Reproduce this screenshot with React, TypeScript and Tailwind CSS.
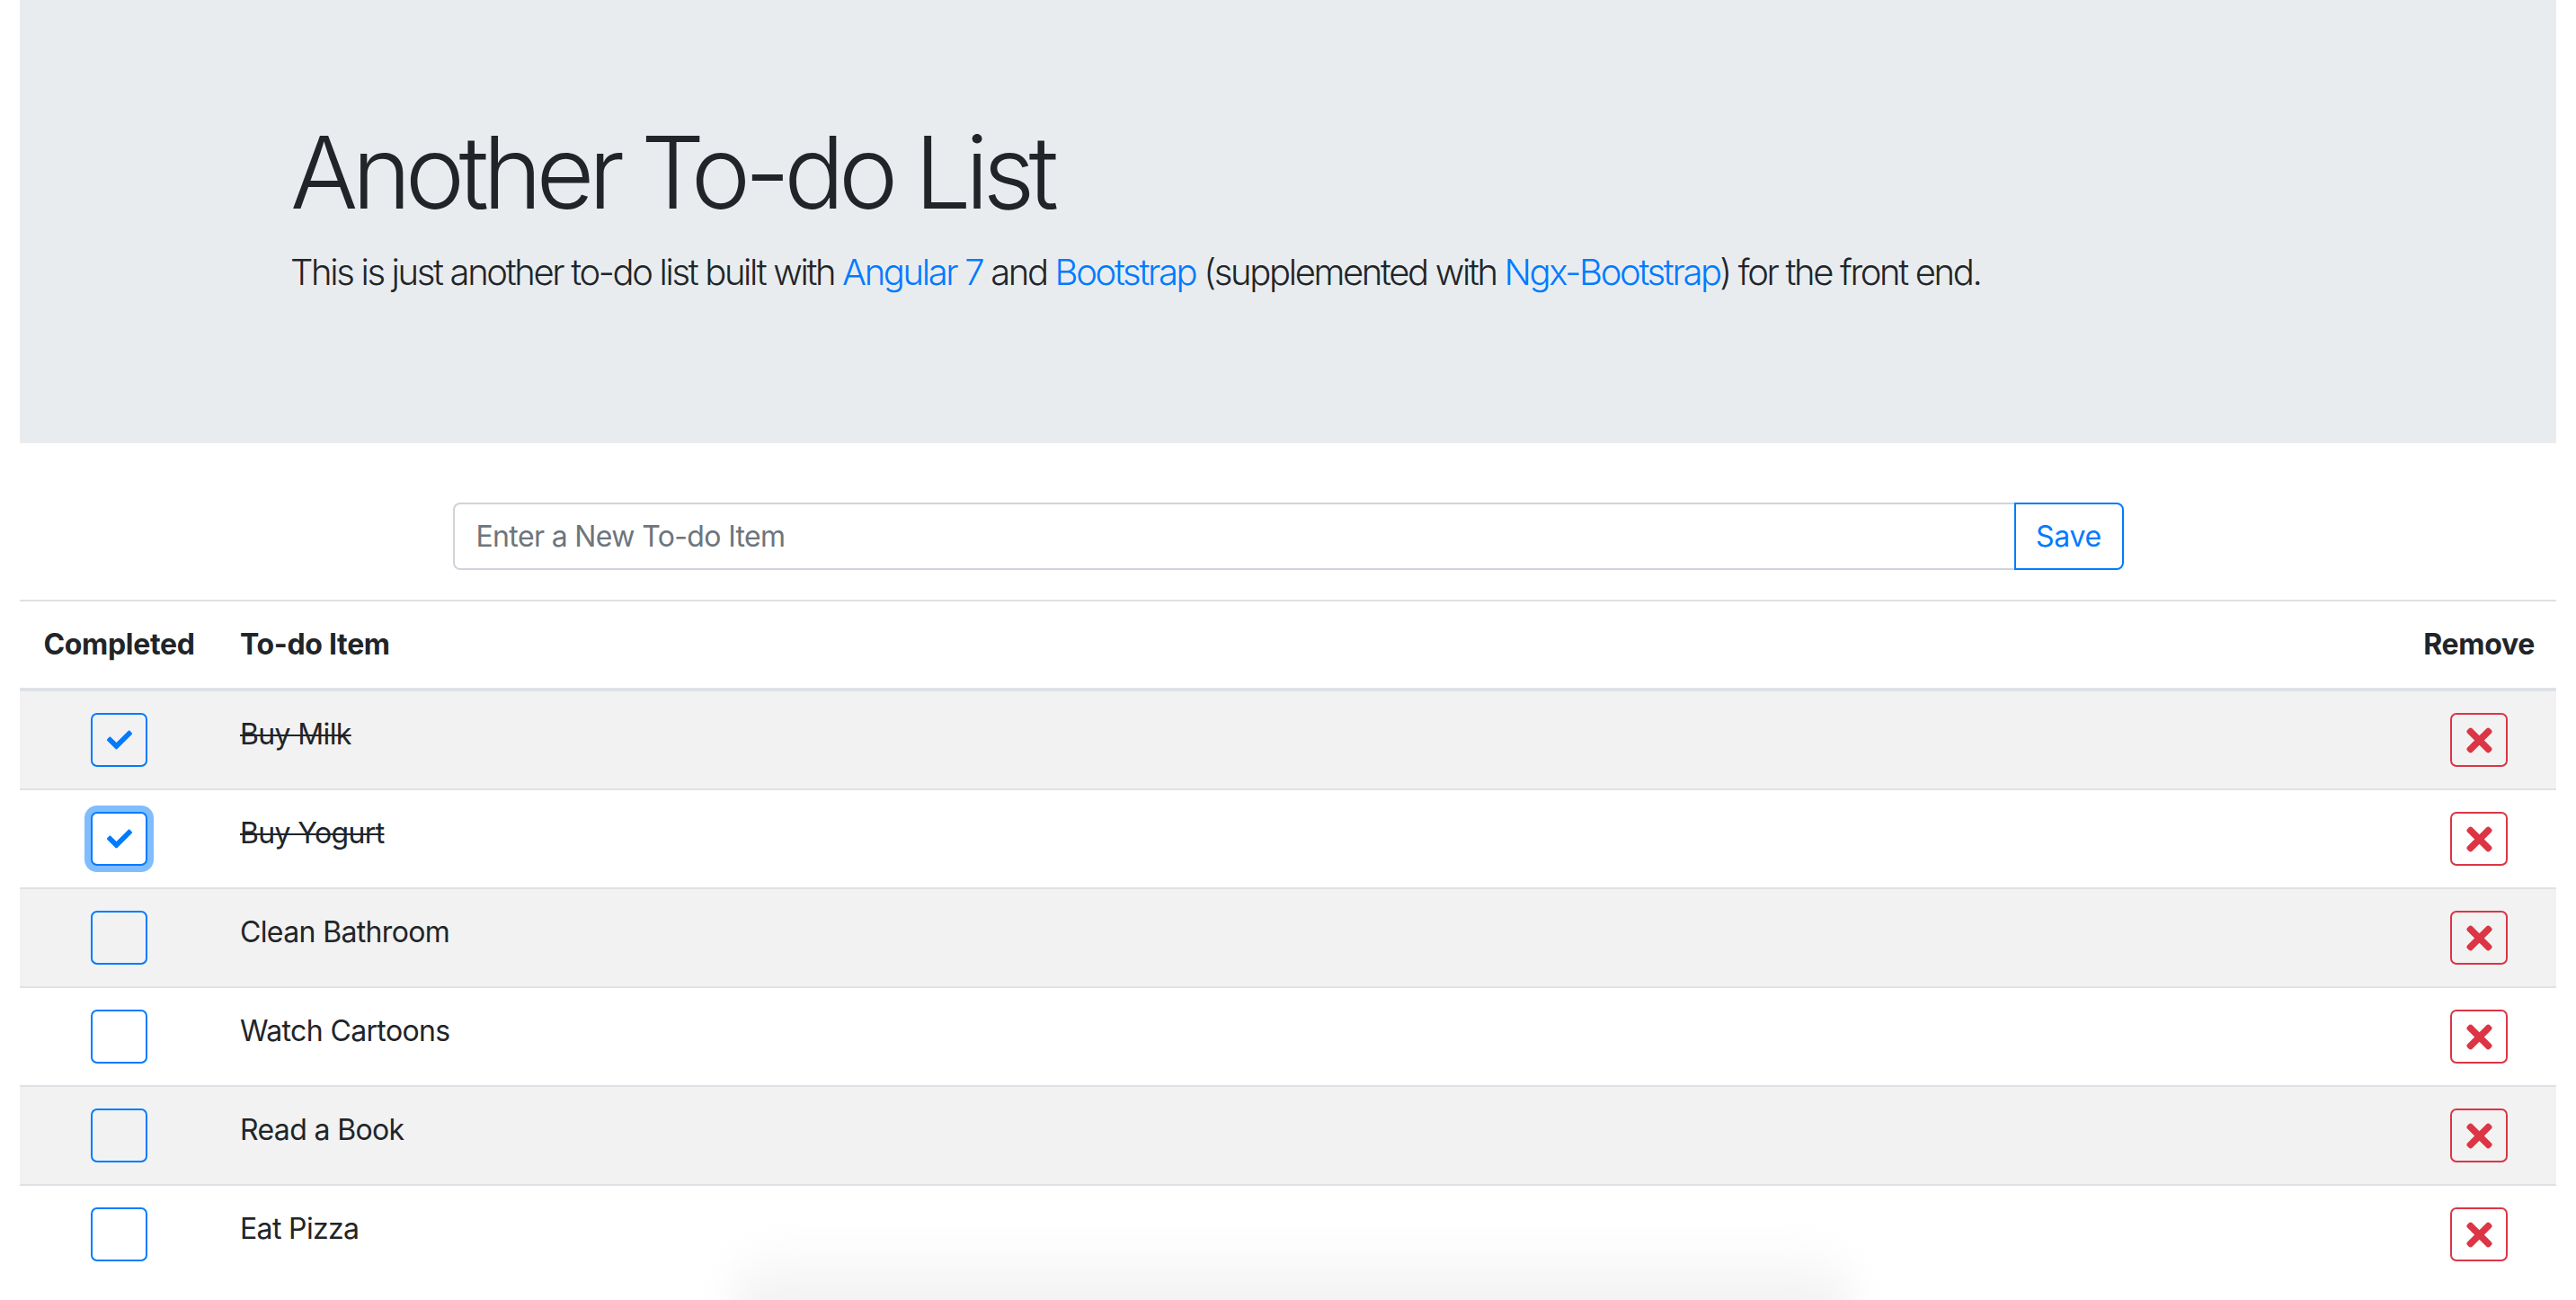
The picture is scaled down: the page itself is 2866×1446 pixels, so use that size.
import { FaCheck, FaTimes } from "react-icons/fa";

interface Todo {
  title: string;
  done: boolean;
  focused?: boolean;
}

const todos: Todo[] = [
  { title: "Buy Milk", done: true },
  { title: "Buy Yogurt", done: true, focused: true },
  { title: "Clean Bathroom", done: false },
  { title: "Watch Cartoons", done: false },
  { title: "Read a Book", done: false },
  { title: "Eat Pizza", done: false },
];

const font = { fontFamily: "Inter, 'Liberation Sans', sans-serif" };

const TodoRow = ({ todo, index }: { todo: Todo; index: number }) => {
  const striped = index % 2 === 0;
  return (
    <tr className={striped ? "bg-[#f2f2f2]" : "bg-white"}>
      <td
        className={`px-6 py-6 align-top ${
          index === 0 ? "" : "border-t-2 border-[#dee2e6]"
        }`}
      >
        <div className="flex justify-center">
          <button
            className={`flex h-[60px] w-[63px] items-center justify-center rounded-[7px] border-2 border-[#007bff] ${
              todo.focused ? "shadow-[0_0_0_7px_#80bdff]" : ""
            } ${striped ? "bg-transparent" : "bg-white"}`}
          >
            {todo.done && <FaCheck size={28} className="text-[#007bff]" />}
          </button>
        </div>
      </td>
      <td
        className={`px-6 py-6 align-top text-[32px] leading-[48px] tracking-[-0.02em] text-[#212529] ${
          index === 0 ? "" : "border-t-2 border-[#dee2e6]"
        }`}
      >
        <span className={todo.done ? "line-through decoration-2" : ""}>{todo.title}</span>
      </td>
      <td
        className={`px-6 py-6 align-top ${
          index === 0 ? "" : "border-t-2 border-[#dee2e6]"
        }`}
      >
        <div className="flex justify-center">
          <button className="flex h-[60px] w-[64px] items-center justify-center rounded-[7px] border-2 border-[#dc3545]">
            <FaTimes size={41} className="text-[#dc3545]" />
          </button>
        </div>
      </td>
    </tr>
  );
};

export default function App() {
  return (
    <div className="relative h-[1446px] overflow-hidden bg-white" style={font}>
      <div className="px-[22px]">
        {/* jumbotron */}
        <div className="h-[493px] bg-[#e9ecef] pl-[301px] pt-[124px]">
          <h1 className="text-[112px] font-light leading-[134px] tracking-[-0.06em] text-[#212529]">
            Another To-do List
          </h1>
          <p className="mt-[15px] text-[40px] font-light leading-[60px] tracking-[-0.059em] text-[#212529]">
            This is just another to-do list built with{" "}
            <a className="text-[#007bff]">Angular 7</a> and{" "}
            <a className="text-[#007bff]">Bootstrap</a> (supplemented with{" "}
            <a className="text-[#007bff]">Ngx-Bootstrap</a>) for the front end.
          </p>
        </div>

        {/* new item */}
        <div className="mt-[66px] flex justify-center">
          <div className="flex h-[75px] w-[1859px]">
            <input
              className="h-full flex-1 rounded-l-[8px] border-2 border-r-0 border-[#ced4da] bg-white px-[24px] text-[32px] tracking-[-0.02em] text-[#495057] outline-none placeholder:text-[#6c757d]"
              placeholder="Enter a New To-do Item"
            />
            <button className="h-full w-[122px] rounded-r-[8px] border-2 border-[#007bff] text-[32px] tracking-[-0.01em] text-[#007bff]">
              Save
            </button>
          </div>
        </div>

        {/* list */}
        <table className="mt-[33px] w-full border-collapse">
          <thead>
            <tr>
              <th className="w-[221px] border-t-2 border-b-4 border-[#dee2e6] px-6 py-6 text-center text-[32px] font-bold leading-[48px] tracking-[-0.01em] text-[#212529]">
                Completed
              </th>
              <th className="border-t-2 border-b-4 border-[#dee2e6] px-6 py-6 text-left text-[32px] font-bold leading-[48px] tracking-[-0.01em] text-[#212529]">
                To-do Item
              </th>
              <th className="w-[168px] border-t-2 border-b-4 border-[#dee2e6] px-6 py-6 text-center text-[32px] font-bold leading-[48px] tracking-[-0.01em] text-[#212529]">
                Remove
              </th>
            </tr>
          </thead>
          <tbody>
            {todos.map((todo, i) => (
              <TodoRow key={todo.title} todo={todo} index={i} />
            ))}
          </tbody>
        </table>
      </div>

      {/* soft shadow at the bottom edge */}
      <div className="pointer-events-none absolute left-[815px] top-[1375px] h-[130px] w-[1245px] rounded-[60px] bg-gradient-to-b from-[#ffffff00] to-[#e9e9e9] blur-[22px]" />
    </div>
  );
}
